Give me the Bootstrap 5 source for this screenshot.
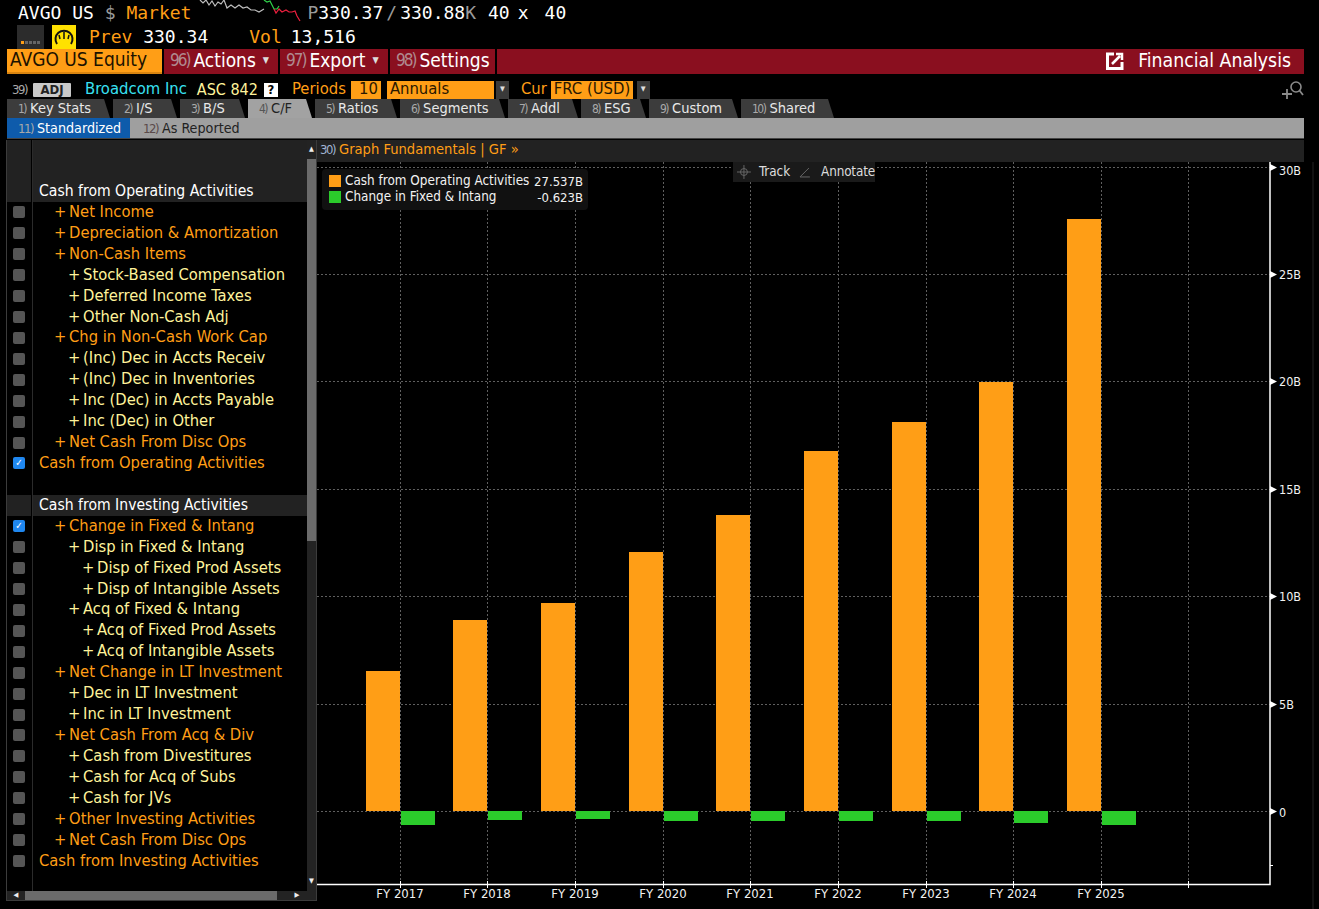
<!DOCTYPE html>
<html lang="en">
<head>
<meta charset="utf-8">
<title>AVGO US Equity - Financial Analysis</title>
<link href="https://cdn.jsdelivr.net/npm/bootstrap@5.3.0/dist/css/bootstrap.min.css" rel="stylesheet">
<style>
:root{--amb:#ff9e16;--red:#8a0f1f;--lab:"DejaVu Sans Condensed","DejaVu Sans",sans-serif;}
html,body{height:909px;overflow:hidden;background:#000;}
body{font-family:var(--lab);font-size:15px;color:#fff;line-height:1;}
.mono{font-family:"DejaVu Sans Mono","Liberation Mono",monospace;font-size:18px;white-space:pre;}
.hdr1{height:25px;padding-left:18px;}
.hdr2{height:24px;padding-left:17px;}
.c-amb{color:var(--amb);}
.c-gry{color:#9a9a9a;}
.dim{color:#a9a9a9;letter-spacing:-1.5px;margin-right:4px;font-size:13px;}
.dimd{color:#5a4a4a;letter-spacing:-1.5px;margin-right:4px;font-size:13px;}
.spark{width:102px;height:25px;margin:0 6px 0 8px;}
.slash{margin:0 3px;}
.pricek{margin-right:12px;}
.tx{margin-left:8px;}
.tx2{margin-left:16px;}
.led{width:27px;height:24px;background:#2c2c2c;}
.gauge{width:24px;height:24px;background:#ffe100;margin:0 13px 0 8px;}
.vol{margin:0 9px 0 41px;}
.menubar{height:25px;margin:0 15px 0 7px;background:var(--red);font-size:19px;}
.menubar>div{padding-bottom:2px;}
.eqbox{width:155px;background:var(--amb);color:#1c1200;padding-left:3px;font-size:19px;border-bottom:2px solid #d98410;}
.menuitem{border-left:2px solid #000;padding:0 0 0 6px;color:#fff;white-space:nowrap;}
.menuitem .dim{color:#b08a90;font-size:17px;letter-spacing:-2px;}
.caret-s{font-size:9px;margin-left:7px;color:#ddd;}
.m-act{width:116px;}.m-exp{width:110px;}.m-set{width:107px;}
.m-fill{border-left:2px solid #000;padding-right:13px;}
.fin{font-size:19.3px;margin-left:14px;}
.optrow{height:19px;margin:6px 15px 0 12px;font-size:16.5px;white-space:nowrap;}
.adj{width:38px;height:14px;background:#c9c9c9;color:#222;font-weight:700;font-size:13px;margin:0 14px 0 2px;border-radius:1px;}
.c-cy{color:#38e2f2;}
.c-ylw{color:#fff39b;font-size:16px;margin-left:10px;}
.qm{width:14px;height:14px;background:#fff;color:#000;font-weight:700;font-size:13px;margin:0 14px 0 6px;}
.ibox{background:var(--amb);color:#2a1800;height:18px;padding:0 3px;}
.ddn{width:13px;height:18px;background:#3a3a3a;color:#ddd;font-size:7px;margin:0 12px 0 2px;}
.ddn2{margin-left:4px;}
.gap6{margin-left:6px;}
.gap5{margin-right:5px;}
.tabrow{height:19px;margin:0 15px 0 7px;gap:3px;font-size:14.5px;}
.tabx{background:#3c3c3c;color:#e8e8e8;clip-path:polygon(0 0,calc(100% - 6px) 0,100% 100%,0 100%);padding-left:11px;white-space:nowrap;}
.tabx .dim{font-size:12px;}
.tabx.on{background:#a2a2a2;color:#222;}
.tabx.on .dim{color:#555;}
.subbar{height:21px;margin:0 15px 0 7px;background:#9f9f9f;font-size:14.2px;color:#222;border-bottom:1px solid #444;}
.subon{width:123px;background:#0e5bab;color:#fff;padding:1px 0 0 11px;}
.suboff{padding:1px 0 0 13px;}
.work{margin:1px 0 0 6px;width:1298px;height:769px;}
.leftp{width:311px;height:761px;border:1px solid #3c3c3c;border-top:0;background:#000;position:relative;flex:none;}
.lcols{height:751px;}
.lscroll{width:9px;background:#232323;flex:none;}
.lthumb{height:382px;background:#6b6b6b;}
.arr{height:19px;color:#eee;font-size:7px;}
.llist{width:274px;flex:none;}
.ltop{height:41px;background:#222;}
.rowx{height:20.93px;line-height:20.93px;white-space:nowrap;font-size:16.4px;}
.rowx.head{background:#222;color:#fff;font-size:15.6px;}
.chkcol{width:25px;flex:none;padding-right:1px;}
.hrow{background:#222;}
.chk{width:12px;height:12px;margin:0 auto;background:#555;border-radius:2px;display:block;}
.chk.yes{background:#1f87ef;color:#fff;font-size:10px;line-height:12px;text-align:center;font-style:normal;}
.sepl{width:1px;background:#2b2b2b;flex:none;}
.lv1{padding-left:21px;color:#ff9e16;}
.lv2{padding-left:35px;color:#fff39b;}
.lv3{padding-left:49px;color:#fff39b;}
.lv0{padding-left:6px;color:#ff9e16;}
.pl{margin-right:-2px;}
.hs{height:9px;background:#232323;}
.hthumb{width:252px;height:9px;background:#6b6b6b;}
.harr{width:18px;color:#eee;font-size:7px;}
.harr2{width:10px;}
.chartp{width:987px;height:769px;position:relative;}
.chdr{height:22px;background:#222;font-size:14.6px;color:var(--amb);padding:0 0 3px 3px;}
.chdr .dim{color:#9fb3d0;}
.plot{display:block;width:987px;height:747px;overflow:visible;}
.plot text{font-family:var(--lab);font-size:12.5px;fill:#f2f2f2;}
.plot text.fy{font-size:13px;}
.legend{position:absolute;left:5px;top:29px;width:266px;height:41px;background:#111;border-radius:4px;font-size:13.4px;padding:4px 0 0 7px;color:#f2f2f2;}
.lrow{height:16px;}
.swb{width:12px;height:12px;margin-right:4px;flex:none;}
.lname{width:188px;white-space:nowrap;}
.lval{width:50px;text-align:right;font-size:13px;}
.tools{position:absolute;left:416px;top:22px;width:142px;height:20px;background:#1a1a1a;font-size:13.4px;color:#ddd;}
.annot{font-size:13.4px;letter-spacing:-.15px;margin-left:9px;}
.mag{width:22px;height:20px;}
</style>
</head>
<body>
<div class="hdr1 mono d-flex align-items-center">
  <span>AVGO US <span class="c-gry">$</span> <span class="c-amb">Market</span></span>
  <svg class="spark" viewBox="0 0 102 25"><polyline fill="none" stroke="#bdbdbd" stroke-width="1.2" points="1,0 4,3 7,0 10,5 13,1 16,6 19,2 22,4 25,0 28,8 32,5 36,8 40,5 44,8 48,7 52,10 56,10 60,12 65,9"/><polyline fill="none" stroke="#2fd24a" stroke-width="1.2" points="65,0 68,2 71,1 73,5 75,9 78,9 80,6"/><polyline fill="none" stroke="#ef1f3f" stroke-width="1.2" points="75,9 77,13 80,9 83,12 87,10 90,12 93,12 96,11 98,16 101,21"/></svg>
  <span><span class="c-gry">P</span>330.37<span class="c-gry slash">/</span>330.88<span class="c-gry pricek">K</span>40<span class="tx">x</span><span class="tx2">40</span></span>
</div>
<div class="hdr2 mono d-flex align-items-center">
  <span class="led d-flex align-items-end justify-content-center gap-1 pb-1"><svg width="20" height="4"><rect width="3" height="3" fill="#ff9e16"/><rect x="4" width="3" height="3" fill="#666"/><rect x="8" width="3" height="3" fill="#666"/><rect x="12" width="3" height="3" fill="#666"/><rect x="16" width="3" height="3" fill="#666"/></svg></span>
  <span class="gauge d-flex align-items-center justify-content-center"><svg width="20" height="18" viewBox="0 0 20 18"><path d="M3 16A8.500 8.500 0 1 1 17 16" fill="none" stroke="#111" stroke-width="2"/><path d="M10 11V4M6 11L5 7M14 11L15 7" stroke="#111" stroke-width="1.500"/></svg></span>
  <span><span class="c-amb">Prev</span> 330.34<span class="c-amb vol">Vol</span>13,516</span>
</div>
<div class="menubar d-flex">
  <div class="eqbox d-flex align-items-center">AVGO US Equity</div>
  <div class="menuitem m-act d-flex align-items-center"><span class="dim">96)</span>Actions<span class="caret-s">▼</span></div>
  <div class="menuitem m-exp d-flex align-items-center"><span class="dim">97)</span>Export<span class="caret-s">▼</span></div>
  <div class="menuitem m-set d-flex align-items-center"><span class="dim">98)</span>Settings</div>
  <div class="m-fill flex-grow-1 d-flex align-items-center justify-content-end">
    <svg width="18" height="18" viewBox="0 0 18 18"><path d="M8 2H1.500V16.500H16V10" fill="none" stroke="#fff" stroke-width="3"/><path d="M6 12L14 4M10 2H16V8" fill="none" stroke="#fff" stroke-width="2.500"/></svg>
    <span class="fin">Financial Analysis</span>
  </div>
</div>
<div class="optrow d-flex align-items-center">
  <span class="dim">39)</span><span class="adj d-flex align-items-center justify-content-center">ADJ</span>
  <span class="c-cy">Broadcom Inc</span><span class="c-ylw">ASC 842</span>
  <span class="qm d-flex align-items-center justify-content-center">?</span>
  <span class="c-amb gap5">Periods</span>
  <span class="ibox d-flex align-items-center justify-content-end" style="width:30px">10</span>
  <span class="ibox d-flex align-items-center gap6" style="width:107px">Annuals</span>
  <span class="ddn d-flex align-items-center justify-content-center">▼</span>
  <span class="c-amb me-1">Cur</span>
  <span class="ibox d-flex align-items-center" style="width:82px">FRC (USD)</span>
  <span class="ddn ddn2 d-flex align-items-center justify-content-center">▼</span>
  <span class="flex-grow-1"></span>
  <svg class="mag" viewBox="0 0 22 20"><circle cx="14" cy="7" r="5" fill="none" stroke="#8a8a8a" stroke-width="1.600"/><path d="M17.500 10.500L21 15M5 9V19M0 14H10" stroke="#8a8a8a" stroke-width="1.800"/></svg>
</div>
<div class="tabrow d-flex">
  <div class="tabx d-flex align-items-center" style="width:103px"><span class="dim">1)</span>Key Stats</div>
  <div class="tabx d-flex align-items-center" style="width:64px"><span class="dim">2)</span>I/S</div>
  <div class="tabx d-flex align-items-center" style="width:65px"><span class="dim">3)</span>B/S</div>
  <div class="tabx on d-flex align-items-center" style="width:64px"><span class="dim">4)</span>C/F</div>
  <div class="tabx d-flex align-items-center" style="width:82px"><span class="dim">5)</span>Ratios</div>
  <div class="tabx d-flex align-items-center" style="width:105px"><span class="dim">6)</span>Segments</div>
  <div class="tabx d-flex align-items-center" style="width:70px"><span class="dim">7)</span>Addl</div>
  <div class="tabx d-flex align-items-center" style="width:65px"><span class="dim">8)</span>ESG</div>
  <div class="tabx d-flex align-items-center" style="width:89px"><span class="dim">9)</span>Custom</div>
  <div class="tabx d-flex align-items-center" style="width:93px"><span class="dim">10)</span>Shared</div>
</div>
<div class="subbar d-flex">
  <div class="subon d-flex align-items-center"><span class="dim">11)</span>Standardized</div>
  <div class="suboff d-flex align-items-center"><span class="dimd">12)</span>As Reported</div>
</div>
<div class="work d-flex">
  <div class="leftp d-flex flex-column">
    <div class="lcols d-flex flex-grow-1">
      <div class="chkcol d-flex flex-column">
        <div class="ltop"></div>
        <div class="rowx hrow"></div>
        <div class="rowx d-flex align-items-center"><i class="chk"></i></div><div class="rowx d-flex align-items-center"><i class="chk"></i></div><div class="rowx d-flex align-items-center"><i class="chk"></i></div><div class="rowx d-flex align-items-center"><i class="chk"></i></div><div class="rowx d-flex align-items-center"><i class="chk"></i></div><div class="rowx d-flex align-items-center"><i class="chk"></i></div><div class="rowx d-flex align-items-center"><i class="chk"></i></div><div class="rowx d-flex align-items-center"><i class="chk"></i></div><div class="rowx d-flex align-items-center"><i class="chk"></i></div><div class="rowx d-flex align-items-center"><i class="chk"></i></div><div class="rowx d-flex align-items-center"><i class="chk"></i></div><div class="rowx d-flex align-items-center"><i class="chk"></i></div>
        <div class="rowx d-flex align-items-center"><i class="chk yes">✓</i></div>
        <div class="rowx"></div>
        <div class="rowx hrow"></div>
        <div class="rowx d-flex align-items-center"><i class="chk yes">✓</i></div>
        <div class="rowx d-flex align-items-center"><i class="chk"></i></div><div class="rowx d-flex align-items-center"><i class="chk"></i></div><div class="rowx d-flex align-items-center"><i class="chk"></i></div><div class="rowx d-flex align-items-center"><i class="chk"></i></div><div class="rowx d-flex align-items-center"><i class="chk"></i></div><div class="rowx d-flex align-items-center"><i class="chk"></i></div><div class="rowx d-flex align-items-center"><i class="chk"></i></div><div class="rowx d-flex align-items-center"><i class="chk"></i></div><div class="rowx d-flex align-items-center"><i class="chk"></i></div><div class="rowx d-flex align-items-center"><i class="chk"></i></div><div class="rowx d-flex align-items-center"><i class="chk"></i></div><div class="rowx d-flex align-items-center"><i class="chk"></i></div><div class="rowx d-flex align-items-center"><i class="chk"></i></div><div class="rowx d-flex align-items-center"><i class="chk"></i></div><div class="rowx d-flex align-items-center"><i class="chk"></i></div><div class="rowx d-flex align-items-center"><i class="chk"></i></div>
      </div>
      <div class="sepl"></div>
      <div class="llist">
        <div class="ltop"></div>
        <div class="rowx head lv0" style="color:#fff">Cash from Operating Activities</div>
        <div class="rowx lv1"><span class="pl">+</span> Net Income</div>
        <div class="rowx lv1"><span class="pl">+</span> Depreciation &amp; Amortization</div>
        <div class="rowx lv1"><span class="pl">+</span> Non-Cash Items</div>
        <div class="rowx lv2"><span class="pl">+</span> Stock-Based Compensation</div>
        <div class="rowx lv2"><span class="pl">+</span> Deferred Income Taxes</div>
        <div class="rowx lv2"><span class="pl">+</span> Other Non-Cash Adj</div>
        <div class="rowx lv1"><span class="pl">+</span> Chg in Non-Cash Work Cap</div>
        <div class="rowx lv2"><span class="pl">+</span> (Inc) Dec in Accts Receiv</div>
        <div class="rowx lv2"><span class="pl">+</span> (Inc) Dec in Inventories</div>
        <div class="rowx lv2"><span class="pl">+</span> Inc (Dec) in Accts Payable</div>
        <div class="rowx lv2"><span class="pl">+</span> Inc (Dec) in Other</div>
        <div class="rowx lv1"><span class="pl">+</span> Net Cash From Disc Ops</div>
        <div class="rowx lv0">Cash from Operating Activities</div>
        <div class="rowx"></div>
        <div class="rowx head lv0" style="color:#fff">Cash from Investing Activities</div>
        <div class="rowx lv1"><span class="pl">+</span> Change in Fixed &amp; Intang</div>
        <div class="rowx lv2"><span class="pl">+</span> Disp in Fixed &amp; Intang</div>
        <div class="rowx lv3"><span class="pl">+</span> Disp of Fixed Prod Assets</div>
        <div class="rowx lv3"><span class="pl">+</span> Disp of Intangible Assets</div>
        <div class="rowx lv2"><span class="pl">+</span> Acq of Fixed &amp; Intang</div>
        <div class="rowx lv3"><span class="pl">+</span> Acq of Fixed Prod Assets</div>
        <div class="rowx lv3"><span class="pl">+</span> Acq of Intangible Assets</div>
        <div class="rowx lv1"><span class="pl">+</span> Net Change in LT Investment</div>
        <div class="rowx lv2"><span class="pl">+</span> Dec in LT Investment</div>
        <div class="rowx lv2"><span class="pl">+</span> Inc in LT Investment</div>
        <div class="rowx lv1"><span class="pl">+</span> Net Cash From Acq &amp; Div</div>
        <div class="rowx lv2"><span class="pl">+</span> Cash from Divestitures</div>
        <div class="rowx lv2"><span class="pl">+</span> Cash for Acq of Subs</div>
        <div class="rowx lv2"><span class="pl">+</span> Cash for JVs</div>
        <div class="rowx lv1"><span class="pl">+</span> Other Investing Activities</div>
        <div class="rowx lv1"><span class="pl">+</span> Net Cash From Disc Ops</div>
        <div class="rowx lv0">Cash from Investing Activities</div>
      </div>
      <div class="lscroll d-flex flex-column">
        <div class="arr d-flex align-items-center justify-content-center">▲</div>
        <div class="lthumb"></div>
        <div class="flex-grow-1"></div>
        <div class="arr d-flex align-items-center justify-content-center">▼</div>
      </div>
    </div>
    <div class="hs d-flex">
      <div class="harr d-flex align-items-center justify-content-center">◀</div>
      <div class="hthumb"></div>
      <div class="flex-grow-1"></div>
      <div class="harr d-flex align-items-center justify-content-center">▶</div>
      <div class="harr2"></div>
    </div>
  </div>
  <div class="chartp">
    <div class="chdr d-flex align-items-center"><span class="dim">30)</span>Graph Fundamentals | GF »</div>
    <svg class="plot" viewBox="0 0 987 747">
      <g stroke="#5f5f5f" stroke-dasharray="2 2" fill="none">
        <path d="M0 5.500H953M0 112.500H953M0 219.500H953M0 327.500H953M0 434.500H953M0 542.500H953M0 649.500H953"/>
        <path d="M83.500 0V722M170.500 0V722M258.500 0V722M346.500 0V722M433.500 0V722M521.500 0V722M609.500 0V722M696.500 0V722M784.500 0V722M871.500 0V722"/>
      </g>
      <g fill="#ff9e16">
        <rect x="49" y="509" width="34" height="140"/><rect x="136" y="458" width="34" height="191"/><rect x="224" y="441" width="34" height="208"/><rect x="312" y="390" width="34" height="259"/><rect x="399" y="353" width="34" height="296"/><rect x="487" y="289" width="34" height="360"/><rect x="575" y="260" width="34" height="389"/><rect x="662" y="220" width="34" height="429"/><rect x="750" y="57" width="34" height="592"/>
      </g>
      <g fill="#2bcb2b">
        <rect x="84" y="649" width="34" height="14"/><rect x="171" y="649" width="34" height="9"/><rect x="259" y="649" width="34" height="8"/><rect x="347" y="649" width="34" height="10"/><rect x="434" y="649" width="34" height="10"/><rect x="522" y="649" width="34" height="10"/><rect x="610" y="649" width="34" height="10"/><rect x="697" y="649" width="34" height="12"/><rect x="785" y="649" width="34" height="14"/>
      </g>
      <path d="M953 0V722.500H0" fill="none" stroke="#fff" stroke-width="1.500"/>
      <path d="M83.500 719V726M170.500 719V726M258.500 719V726M346.500 719V726M433.500 719V726M521.500 719V726M609.500 719V726M696.500 719V726M784.500 719V726M871.500 719V726M953 703.500H956" stroke="#fff" fill="none"/>
      <g fill="#fff">
        <path d="M953 2L960 5.500L953 9Z"/><path d="M953 109L960 112.500L953 116Z"/><path d="M953 216L960 219.500L953 223Z"/><path d="M953 324L960 327.500L953 331Z"/><path d="M953 431L960 434.500L953 438Z"/><path d="M953 539L960 542.500L953 546Z"/><path d="M953 646L960 649.500L953 653Z"/>
      </g>
      <g>
        <text x="962" y="13">30B</text><text x="962" y="117">25B</text><text x="962" y="224">20B</text><text x="962" y="332">15B</text><text x="962" y="439">10B</text><text x="962" y="547">5B</text><text x="962" y="655">0</text>
      </g>
      <g text-anchor="middle">
        <text class="fy" x="83" y="736">FY 2017</text><text class="fy" x="170" y="736">FY 2018</text><text class="fy" x="258" y="736">FY 2019</text><text class="fy" x="346" y="736">FY 2020</text><text class="fy" x="433" y="736">FY 2021</text><text class="fy" x="521" y="736">FY 2022</text><text class="fy" x="609" y="736">FY 2023</text><text class="fy" x="696" y="736">FY 2024</text><text class="fy" x="784" y="736">FY 2025</text>
      </g>
      <path d="M996 0V747" stroke="#222"/>
    </svg>
    <div class="legend">
      <div class="lrow d-flex align-items-center"><span class="swb" style="background:#ff9e16"></span><span class="lname">Cash from Operating Activities</span><span class="lval">27.537B</span></div>
      <div class="lrow d-flex align-items-center"><span class="swb" style="background:#2bcb2b"></span><span class="lname">Change in Fixed &amp; Intang</span><span class="lval">-0.623B</span></div>
    </div>
    <div class="tools d-flex align-items-center">
      <svg class="ms-1" width="14" height="14" viewBox="0 0 14 14"><circle cx="7" cy="7" r="3.500" fill="none" stroke="#666"/><path d="M7 0V14M0 7H14" stroke="#666"/></svg>
      <span class="ms-2">Track</span>
      <svg class="ms-2" width="14" height="14" viewBox="0 0 14 14"><path d="M2 12L11 3M2 12H12" stroke="#666" fill="none"/></svg>
      <span class="annot">Annotate</span>
    </div>
  </div>
</div>
<script src="https://cdn.jsdelivr.net/npm/bootstrap@5.3.0/dist/js/bootstrap.bundle.min.js"></script>
</body>
</html>
